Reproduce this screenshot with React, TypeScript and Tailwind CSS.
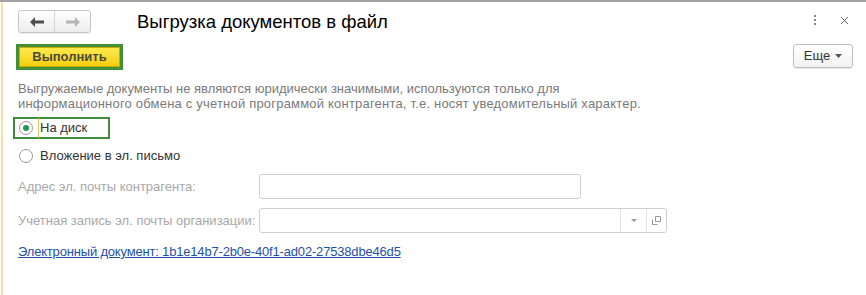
import React from "react";

// Окно 1С: выгрузка документов в файл
function NavButtons() {
  return (
    <div className="flex h-[23px] w-[73px] rounded-[3px] border border-[#c6c6c6] bg-gradient-to-b from-white to-[#ececec] shadow-[0_1px_1px_rgba(0,0,0,0.08)]">
      <div className="flex w-[36px] items-center justify-center border-r border-[#d4d4d4]">
        <svg width="14" height="10" viewBox="0 0 14 10">
          <path d="M0 5 L5 0 L5 3.5 L14 3.5 L14 6.5 L5 6.5 L5 10 Z" fill="#4d4d4d" />
        </svg>
      </div>
      <div className="flex flex-1 items-center justify-center">
        <svg width="14" height="10" viewBox="0 0 14 10">
          <path d="M14 5 L9 0 L9 3.5 L0 3.5 L0 6.5 L9 6.5 L9 10 Z" fill="#b4b4b4" />
        </svg>
      </div>
    </div>
  );
}

function Radio({ checked, label, focused }: { checked?: boolean; label: string; focused?: boolean }) {
  return (
    <div
      className={`flex h-[22px] items-center ${
        focused ? "w-[97px] border-2 border-[#3f8f3a] pl-[4px]" : "pl-[6px]"
      }`}
    >
      <div className="flex h-[14px] w-[14px] items-center justify-center rounded-full border border-[#9a9a9a] bg-white">
        {checked && <div className="h-[6px] w-[6px] rounded-full bg-[#1e9a4a]" />}
      </div>
      <span className={`ml-[5px] text-[13px] text-[#333] ${focused ? "border-l border-[#e8c860] pl-[1px]" : "pl-[2px]"}`}>
        {label}
      </span>
    </div>
  );
}

export default function App() {
  return (
    <div className="h-[295px] w-[866px] overflow-hidden border-t-2 border-[#a3a3a3] bg-white pl-px font-['Liberation_Sans',Arial,sans-serif]">
      <div className="h-full border-l-2 border-[#f2e3a6]">
        {/* Заголовок */}
        <div className="flex h-[40px] items-start pt-[8px] pl-[15px] pr-[16px]">
          <NavButtons />
          <div className="ml-[46px] text-[18.5px] leading-[23px] text-black">Выгрузка документов в файл</div>
          <div className="ml-auto flex items-center gap-[24px] pt-[5px]">
            <div className="flex flex-col gap-[2px]">
              <div className="h-[2px] w-[2px] bg-[#888]" />
              <div className="h-[2px] w-[2px] bg-[#888]" />
              <div className="h-[2px] w-[2px] bg-[#888]" />
            </div>
            <svg width="9" height="9" viewBox="0 0 9 9" className="mr-[1px]">
              <path d="M1 1 L8 8 M8 1 L1 8" stroke="#666" strokeWidth="1" />
            </svg>
          </div>
        </div>

        {/* Командная панель */}
        <div className="mt-[2px] flex items-start pl-[13px] pr-[13px]">
          <div className="border-[3px] border-[#44903a] p-0">
            <div className="flex h-[20px] w-[101px] items-center justify-center border border-[#c9a800] bg-gradient-to-b from-[#ffe94a] to-[#f5cf00] text-[13px] font-bold text-[#4a4a3a]">
              Выполнить
            </div>
          </div>
          <div className="ml-auto flex h-[24px] w-[60px] items-center justify-center gap-[5px] rounded-[3px] border border-[#bdbdbd] bg-gradient-to-b from-white to-[#f2f2f2] text-[13px] text-[#333] shadow-[0_1px_1px_rgba(0,0,0,0.1)]">
            Еще
            <svg width="7" height="4" viewBox="0 0 7 4">
              <path d="M0 0 L7 0 L3.5 4 Z" fill="#555" />
            </svg>
          </div>
        </div>

        {/* Пояснение */}
        <div className="mt-[11px] pl-[15px] text-[13px] leading-[15px] text-[#7a7a7a]">
          Выгружаемые документы не являются юридически значимыми, используются только для
          <br />
          <span className="tracking-[0.2px]">
            информационного обмена с учетной программой контрагента, т.е. носят уведомительный характер.
          </span>
        </div>

        {/* Способ выгрузки */}
        <div className="mt-[6px] flex flex-col gap-[6px] pl-[10px]">
          <Radio checked focused label="На диск" />
          <Radio label="Вложение в эл. письмо" />
        </div>

        {/* Поля */}
        <div className="mt-[7px] flex flex-col gap-[9px] pl-[15px]">
          <div className="flex items-center">
            <div className="w-[241px] text-[13px] text-[#a8a8a8]">Адрес эл. почты контрагента:</div>
            <div className="h-[25px] w-[322px] rounded-[3px] border border-[#cfcfcf] bg-white" />
          </div>
          <div className="flex items-center">
            <div className="w-[241px] text-[13px] text-[#a8a8a8]">Учетная запись эл. почты организации:</div>
            <div className="flex h-[25px] w-[408px] rounded-[3px] border border-[#cfcfcf] bg-white">
              <div className="flex-1" />
              <div className="flex w-[26px] items-center justify-center border-l border-[#e2e2e2]">
                <svg width="6" height="3" viewBox="0 0 6 3">
                  <path d="M0 0 L6 0 L3 3 Z" fill="#999" />
                </svg>
              </div>
              <div className="flex w-[20px] items-center justify-center border-l border-[#e2e2e2]">
                <svg width="9" height="9" viewBox="0 0 9 9">
                  <path d="M3.5 0.5 H8.5 V5.5 H3.5 Z M0.5 3.5 V8.5 H5.5" fill="none" stroke="#999" strokeWidth="1" />
                </svg>
              </div>
            </div>
          </div>
        </div>

        <div className="mt-[6px] pl-[15px]">
          <a className="text-[13px] tracking-[-0.18px] text-[#1f4fa8] underline">
            Электронный документ: 1b1e14b7-2b0e-40f1-ad02-27538dbe46d5
          </a>
        </div>
      </div>
    </div>
  );
}
